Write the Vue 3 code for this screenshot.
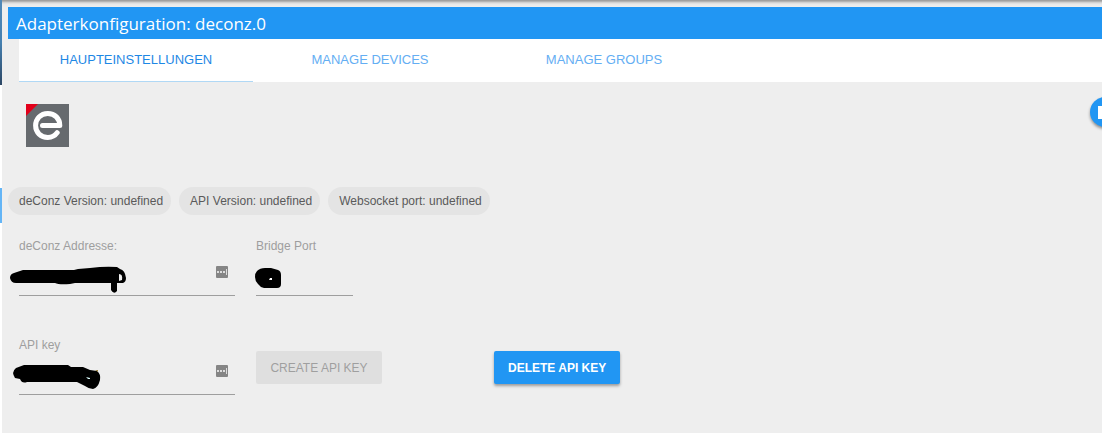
<template>
  <div class="page">
    <aside class="rail">
      <span class="rail-header"></span>
      <span class="rail-active"></span>
    </aside>

    <main class="dialog">
      <h1 class="title">Adapterkonfiguration: deconz.0</h1>

      <nav class="tabs">
        <a
          v-for="tab in tabs"
          :key="tab.id"
          :href="`#${tab.id}`"
          class="tab"
          :class="{ active: tab.id === activeTab }"
          @click.prevent="activeTab = tab.id"
          >{{ tab.label }}</a
        >
      </nav>

      <button class="fab" type="button" aria-label="Help">
        <span class="fab-glyph"></span>
      </button>

      <svg class="logo" viewBox="0 0 43 43" role="img" aria-label="deCONZ">
        <rect width="43" height="43" fill="#666a6e" />
        <path d="M0 0H12L0 12Z" fill="#e2001a" />
        <path
          d="M16.5 21.5H33.8C33.8 14.5 28.8 9.5 21.8 9.5C14.6 9.5 9.6 14.8 9.6 21.6C9.6 28.6 14.8 33.4 21.8 33.4C26 33.4 29.2 31.6 31.2 28.7"
          fill="none"
          stroke="#fff"
          stroke-width="5"
          stroke-linecap="round"
          stroke-linejoin="round"
        />
      </svg>

      <div class="chips">
        <span v-for="chip in chips" :key="chip" class="chip">{{ chip }}</span>
      </div>

      <form class="form" @submit.prevent>
        <div class="row">
          <div class="field">
            <label for="host">deConz Addresse:</label>
            <div class="control">
              <input id="host" v-model="host" type="text" />
              <svg class="manager-icon" viewBox="0 0 12 12" aria-hidden="true">
                <rect width="12" height="12" rx="1" fill="#858585" />
                <path d="M1 5h2v2H1zM4 5h2v2H4zM7 5h2v2H7zM10 3h1v6h-1z" fill="#ddd" />
              </svg>
              <svg class="scribble host" viewBox="0 0 118 32" aria-hidden="true">
                <path
                  d="M4 8Q0 9 0 13Q1 18 6 18H45Q49 20 60 19L65 18H101V25Q104 30 107 26V18H113Q116 17 116 13Q115 5 110 4L107 2Q95 1 80 3L68 4L64 5H13Z"
                />
                <path d="M109 9Q113 9 112 15L109 16Z" fill="#eee" />
              </svg>
            </div>
          </div>
          <div class="field short">
            <label for="port">Bridge Port</label>
            <div class="control">
              <input id="port" v-model="port" type="text" />
              <svg class="scribble port" viewBox="0 0 28 22" aria-hidden="true">
                <path
                  d="M2 3Q5 0 10 0H16L23 2Q26 3 26 7V16Q26 20 22 20H9Q5 19 3 16Q0 13 0 9Q0 5 2 3Z"
                />
                <path d="M15 10l2 0v2h-3z" fill="#fff" />
              </svg>
            </div>
          </div>
        </div>

        <div class="row">
          <div class="field">
            <label for="key">API key</label>
            <div class="control">
              <input id="key" v-model="apiKey" type="text" />
              <svg class="manager-icon" viewBox="0 0 12 12" aria-hidden="true">
                <rect width="12" height="12" rx="1" fill="#858585" />
                <path d="M1 5h2v2H1zM4 5h2v2H4zM7 5h2v2H7zM10 3h1v6h-1z" fill="#ddd" />
              </svg>
              <svg class="scribble key" viewBox="0 0 90 28" aria-hidden="true">
                <path
                  d="M3 4L11 1H55L58 3H70L77 6L84 7Q88 10 87 16Q85 24 80 25Q76 25 72 22L64 18H14Q9 20 7 15L2 14Q-2 8 3 4Z"
                />
                <path d="M73 13l4 1v1h-2z" fill="#dff" />
                <path d="M82 6h3v2z" fill="#9a8448" />
              </svg>
            </div>
          </div>
          <button class="btn" type="button" disabled>CREATE API KEY</button>
          <button class="btn primary" type="button">DELETE API KEY</button>
        </div>
      </form>
    </main>
  </div>
</template>

<script setup>
import { ref } from "vue";

const tabs = [
  { id: "main", label: "HAUPTEINSTELLUNGEN" },
  { id: "devices", label: "MANAGE DEVICES" },
  { id: "groups", label: "MANAGE GROUPS" },
];
const activeTab = ref("main");

const chips = [
  "deConz Version: undefined",
  "API Version: undefined",
  "Websocket port: undefined",
];

const host = ref("");
const port = ref("");
const apiKey = ref("");
</script>

<style>
body {
  margin: 0;
  background: #fff;
}
</style>

<style scoped>
.page {
  display: flex;
  min-height: 100vh;
  overflow: hidden;
  font-family: "Liberation Sans", Arial, sans-serif;
  font-size: 12px;
}
/* sliver of the admin menu behind the dialog */
.rail {
  display: flex;
  flex-direction: column;
  gap: 103px;
  width: 2px;
}
.rail-header {
  height: 85px;
  background: linear-gradient(#5088b8, #4580b0 50%, #2d4765);
}
.rail-active {
  height: 35px;
  background: #64b5f6;
}
.dialog {
  position: relative;
  flex: 1;
  min-width: 0;
  box-sizing: border-box;
  padding: 7px 0 0 6px;
  background: linear-gradient(#a0a0a0 0, #a0a0a0 1px, #c8c8c8 2px, #e8e8e8 4px, #eee 7px);
}
.title {
  margin: 0;
  padding-left: 8px;
  background: #2196f3;
  color: #fff;
  font-family: "Open Sans", sans-serif;
  font-size: 17px;
  font-weight: 400;
  line-height: 34px;
  height: 32px;
}
.tabs {
  display: flex;
  height: 43px;
  margin-left: 11px;
  background: #fff;
}
.tab {
  box-sizing: border-box;
  width: 234px;
  border-bottom: 1px solid transparent;
  color: #64aef3;
  font-size: 13px;
  line-height: 41px;
  text-align: center;
  text-decoration: none;
}
.tab.active {
  border-bottom-color: #b0d8f5;
  color: #1e88e5;
}
/* floating help button, hanging over the right edge */
.fab {
  position: absolute;
  top: 97px;
  right: -18px;
  width: 30px;
  height: 30px;
  padding: 7px 8px;
  border: 0;
  border-radius: 50%;
  background: #2196f3;
  box-shadow: 0 2px 3px rgba(0, 0, 0, 0.4);
}
.fab-glyph {
  display: block;
  height: 13px;
  background: #fff;
}
.logo {
  display: block;
  width: 43px;
  height: 43px;
  margin: 22px 0 40px 18px;
}
.chips {
  display: flex;
  gap: 8px;
}
.chip {
  padding: 0 8px 0 11px;
  border-radius: 14px;
  background: #e4e4e4;
  color: #5a5a5a;
  line-height: 28px;
}
.form {
  display: grid;
  gap: 40px;
  padding: 22px 11px;
}
.row {
  display: grid;
  grid-template-columns: 216px 217px 217px;
  gap: 21px;
  align-items: start;
}
.field label {
  display: block;
  color: #9e9e9e;
  line-height: 18px;
}
.field.short {
  width: 97px;
}
.control {
  position: relative;
  display: flex;
  align-items: center;
  height: 40px;
  border-bottom: 1px solid #9e9e9e;
}
.control input {
  flex: 1;
  min-width: 0;
  padding: 0;
  border: 0;
  outline: 0;
  background: transparent;
  font: inherit;
}
.manager-icon {
  width: 12px;
  height: 12px;
  margin: 0 7px 6px 0;
}
/* marker strokes hiding the private values */
.scribble {
  position: absolute;
  overflow: visible;
}
.scribble.host {
  top: 10px;
  left: -9px;
  width: 118px;
}
.scribble.port {
  top: 13px;
  left: -1px;
  width: 28px;
}
.scribble.key {
  top: 10px;
  left: -6px;
  width: 90px;
}
.btn {
  justify-self: start;
  min-width: 126px;
  height: 33px;
  margin-top: 15px;
  padding: 0 14px;
  border: 0;
  border-radius: 2px;
  background: #dfdfdf;
  color: #9f9f9f;
  font-family: inherit;
  font-size: 12px;
}
.btn.primary {
  background: #2196f3;
  box-shadow: 0 2px 3px rgba(0, 0, 0, 0.35);
  color: #fff;
  font-weight: 700;
}
</style>
